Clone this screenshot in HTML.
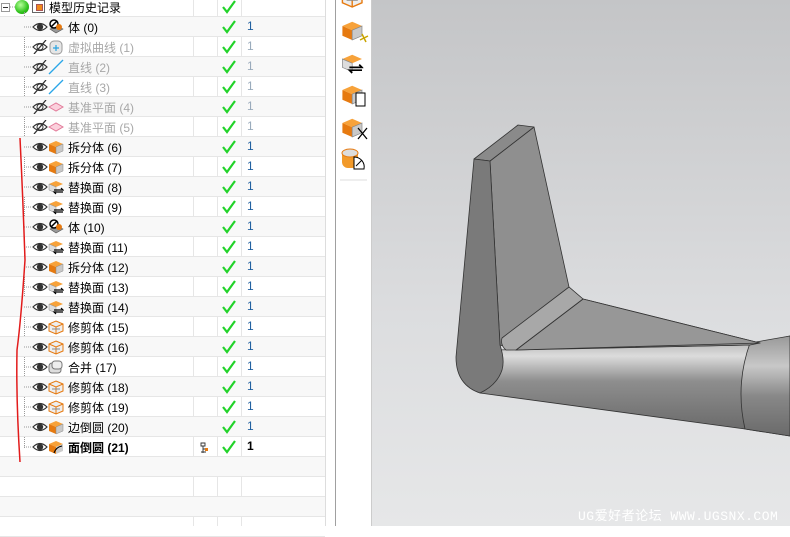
<!DOCTYPE html>
<html><head><meta charset="utf-8"><style>
*{margin:0;padding:0;box-sizing:border-box}
body{width:790px;height:526px;overflow:hidden;background:#fff;position:relative;font-family:"Liberation Sans","Noto Sans CJK SC",sans-serif;font-size:12px;color:#000}
.row{position:absolute;left:0;width:325px;height:20px;border-bottom:1px solid #e6e6e6}
.lbl{position:absolute;left:68px;top:2px;white-space:nowrap}
.dim{color:#a8a8a8}
.ck{position:absolute;left:221px;top:2px}
.one{position:absolute;left:247px;top:2px;color:#1f5f9f}
.dim .one{color:#9ab}
.eye{position:absolute;left:32px;top:3px}
.ic{position:absolute;left:48px;top:2px}
.vl{position:absolute;top:0;height:526px;width:1px;background:#e6e6e6}
</style></head><body>
<svg width="0" height="0" style="position:absolute">
<defs>
<symbol id="ck" viewBox="0 0 16 16"><path d="M2 8 L6 13 L14 2" fill="none" stroke="#22d32a" stroke-width="2.2"/></symbol>
<symbol id="eye" viewBox="0 0 16 14"><path d="M1 7 Q8 0 15 7 Q8 14 1 7Z" fill="#fff" stroke="#333" stroke-width="1.2"/><circle cx="8" cy="7" r="3.2" fill="#333"/></symbol>
<symbol id="eyeh" viewBox="0 0 16 14"><path d="M1 7 Q8 0 15 7 Q8 14 1 7Z" fill="none" stroke="#333" stroke-width="1.2"/><circle cx="8" cy="7" r="3" fill="none" stroke="#333"/><path d="M2 14 L14 0" stroke="#333" stroke-width="1.3"/></symbol>
<symbol id="box" viewBox="0 0 16 16"><path d="M1 5 L8 2 L15 5 L8 8Z" fill="#f7a23a"/><path d="M1 5 L8 8 L8 15 L1 12Z" fill="#e67a10"/><path d="M8 8 L15 5 L15 12 L8 15Z" fill="#c9c9c9" stroke="#888" stroke-width=".5"/></symbol>
<symbol id="rep" viewBox="0 0 16 16"><path d="M1 5 L8 2 L15 5 L8 8Z" fill="#f7a23a"/><path d="M1 5 L8 8 L8 14 L1 11Z" fill="#ddd" stroke="#888" stroke-width=".5"/><path d="M6 11 H15 L13 9 M15 13 H6 L8 15" fill="none" stroke="#000" stroke-width="1.2"/></symbol>
<symbol id="trim" viewBox="0 0 16 16"><path d="M1 5 L8 2 L15 5 L15 12 L8 15 L1 12Z" fill="#eee" stroke="#e67a10"/><path d="M1 5 L8 8 L15 5 M8 8 V15" fill="none" stroke="#e67a10"/><path d="M4 10 L12 10" stroke="#888"/></symbol>
<symbol id="body" viewBox="0 0 16 16"><path d="M2 10 L9 7 L15 10 L8 14Z" fill="#999" stroke="#555" stroke-width=".6"/><circle cx="6" cy="5" r="4" fill="#fff" stroke="#000" stroke-width="1.5"/><path d="M3 8 L9 2" stroke="#000" stroke-width="1.5"/><circle cx="11" cy="8" r="3" fill="#e67a10"/></symbol>
<symbol id="unite" viewBox="0 0 16 16"><rect x="1" y="4" width="12" height="10" rx="3" fill="#ddd" stroke="#777"/><rect x="4" y="2" width="10" height="8" rx="3" fill="#eee" stroke="#777"/></symbol>
<symbol id="blend" viewBox="0 0 16 16"><path d="M1 5 L8 2 L15 5 L8 8Z" fill="#f7a23a"/><path d="M1 5 L8 8 L8 15 L1 12Z" fill="#e67a10"/><path d="M8 8 L15 5 L15 12 L8 15Z" fill="#ccc"/><path d="M6 14 Q8 8 14 7" fill="none" stroke="#000" stroke-width="1.1"/></symbol>
<symbol id="curve" viewBox="0 0 16 16"><rect x="2" y="2" width="12" height="13" rx="4" fill="#e6e6e6" stroke="#999"/><path d="M8 6 V12 M5 9 H11" stroke="#29a3e0" stroke-width="1.2"/></symbol>
<symbol id="line" viewBox="0 0 16 16"><path d="M1 15 L15 1" stroke="#2aa6e8" stroke-width="1.3"/></symbol>
<symbol id="plane" viewBox="0 0 16 16"><path d="M1 8 L8 4 L15 8 L8 12Z" fill="#fbd0dc" stroke="#e27b9a"/></symbol>
</defs></svg>

<div class="vl" style="left:193px"></div>
<div class="vl" style="left:217px"></div>
<div class="vl" style="left:241px"></div>
<div class="vl" style="left:325px;background:#ddd"></div>

<div class="row" style="top:-3px"><div style="position:absolute;left:1px;top:6px;width:9px;height:9px;border:1px solid #999;background:#fff"><div style="position:absolute;left:1px;top:3px;width:5px;height:1px;background:#333"></div></div><div style="position:absolute;left:15px;top:3px;width:14px;height:14px;border-radius:50%;background:radial-gradient(circle at 40% 35%,#b6ff9a,#2fc21b 60%,#1a8a10)"></div><div style="position:absolute;left:32px;top:3px;width:13px;height:13px;border:1px solid #666;background:#fff"><div style="position:absolute;left:3px;top:3px;width:7px;height:7px;background:#f08a1a;border:1px solid #a55"></div></div><span class="lbl" style="left:49px">模型历史记录</span><svg class="ck" width="16" height="16"><use href="#ck"/></svg></div>

<div style="position:absolute;left:24px;top:12px;width:0;height:436px;border-left:1px dotted #999"></div>

<div class="row" style="top:17px;background:#f8f8f8"><svg class="eye" width="16" height="14"><use href="#eye"/></svg><svg class="ic" width="16" height="16"><use href="#body"/></svg><span class="lbl">体 (0)</span><svg class="ck" width="16" height="16"><use href="#ck"/></svg><span class="one">1</span></div>
<div class="row dim" style="top:37px"><svg class="eye" width="16" height="14"><use href="#eyeh"/></svg><svg class="ic" width="16" height="16"><use href="#curve"/></svg><span class="lbl">虚拟曲线 (1)</span><svg class="ck" width="16" height="16"><use href="#ck"/></svg><span class="one">1</span></div>
<div class="row dim" style="top:57px;background:#f8f8f8"><svg class="eye" width="16" height="14"><use href="#eyeh"/></svg><svg class="ic" width="16" height="16"><use href="#line"/></svg><span class="lbl">直线 (2)</span><svg class="ck" width="16" height="16"><use href="#ck"/></svg><span class="one">1</span></div>
<div class="row dim" style="top:77px"><svg class="eye" width="16" height="14"><use href="#eyeh"/></svg><svg class="ic" width="16" height="16"><use href="#line"/></svg><span class="lbl">直线 (3)</span><svg class="ck" width="16" height="16"><use href="#ck"/></svg><span class="one">1</span></div>
<div class="row dim" style="top:97px;background:#f8f8f8"><svg class="eye" width="16" height="14"><use href="#eyeh"/></svg><svg class="ic" width="16" height="16"><use href="#plane"/></svg><span class="lbl">基准平面 (4)</span><svg class="ck" width="16" height="16"><use href="#ck"/></svg><span class="one">1</span></div>
<div class="row dim" style="top:117px"><svg class="eye" width="16" height="14"><use href="#eyeh"/></svg><svg class="ic" width="16" height="16"><use href="#plane"/></svg><span class="lbl">基准平面 (5)</span><svg class="ck" width="16" height="16"><use href="#ck"/></svg><span class="one">1</span></div>
<div class="row" style="top:137px;background:#f8f8f8"><svg class="eye" width="16" height="14"><use href="#eye"/></svg><svg class="ic" width="16" height="16"><use href="#box"/></svg><span class="lbl">拆分体 (6)</span><svg class="ck" width="16" height="16"><use href="#ck"/></svg><span class="one">1</span></div>
<div class="row" style="top:157px"><svg class="eye" width="16" height="14"><use href="#eye"/></svg><svg class="ic" width="16" height="16"><use href="#box"/></svg><span class="lbl">拆分体 (7)</span><svg class="ck" width="16" height="16"><use href="#ck"/></svg><span class="one">1</span></div>
<div class="row" style="top:177px;background:#f8f8f8"><svg class="eye" width="16" height="14"><use href="#eye"/></svg><svg class="ic" width="16" height="16"><use href="#rep"/></svg><span class="lbl">替换面 (8)</span><svg class="ck" width="16" height="16"><use href="#ck"/></svg><span class="one">1</span></div>
<div class="row" style="top:197px"><svg class="eye" width="16" height="14"><use href="#eye"/></svg><svg class="ic" width="16" height="16"><use href="#rep"/></svg><span class="lbl">替换面 (9)</span><svg class="ck" width="16" height="16"><use href="#ck"/></svg><span class="one">1</span></div>
<div class="row" style="top:217px;background:#f8f8f8"><svg class="eye" width="16" height="14"><use href="#eye"/></svg><svg class="ic" width="16" height="16"><use href="#body"/></svg><span class="lbl">体 (10)</span><svg class="ck" width="16" height="16"><use href="#ck"/></svg><span class="one">1</span></div>
<div class="row" style="top:237px"><svg class="eye" width="16" height="14"><use href="#eye"/></svg><svg class="ic" width="16" height="16"><use href="#rep"/></svg><span class="lbl">替换面 (11)</span><svg class="ck" width="16" height="16"><use href="#ck"/></svg><span class="one">1</span></div>
<div class="row" style="top:257px;background:#f8f8f8"><svg class="eye" width="16" height="14"><use href="#eye"/></svg><svg class="ic" width="16" height="16"><use href="#box"/></svg><span class="lbl">拆分体 (12)</span><svg class="ck" width="16" height="16"><use href="#ck"/></svg><span class="one">1</span></div>
<div class="row" style="top:277px"><svg class="eye" width="16" height="14"><use href="#eye"/></svg><svg class="ic" width="16" height="16"><use href="#rep"/></svg><span class="lbl">替换面 (13)</span><svg class="ck" width="16" height="16"><use href="#ck"/></svg><span class="one">1</span></div>
<div class="row" style="top:297px;background:#f8f8f8"><svg class="eye" width="16" height="14"><use href="#eye"/></svg><svg class="ic" width="16" height="16"><use href="#rep"/></svg><span class="lbl">替换面 (14)</span><svg class="ck" width="16" height="16"><use href="#ck"/></svg><span class="one">1</span></div>
<div class="row" style="top:317px"><svg class="eye" width="16" height="14"><use href="#eye"/></svg><svg class="ic" width="16" height="16"><use href="#trim"/></svg><span class="lbl">修剪体 (15)</span><svg class="ck" width="16" height="16"><use href="#ck"/></svg><span class="one">1</span></div>
<div class="row" style="top:337px;background:#f8f8f8"><svg class="eye" width="16" height="14"><use href="#eye"/></svg><svg class="ic" width="16" height="16"><use href="#trim"/></svg><span class="lbl">修剪体 (16)</span><svg class="ck" width="16" height="16"><use href="#ck"/></svg><span class="one">1</span></div>
<div class="row" style="top:357px"><svg class="eye" width="16" height="14"><use href="#eye"/></svg><svg class="ic" width="16" height="16"><use href="#unite"/></svg><span class="lbl">合并 (17)</span><svg class="ck" width="16" height="16"><use href="#ck"/></svg><span class="one">1</span></div>
<div class="row" style="top:377px;background:#f8f8f8"><svg class="eye" width="16" height="14"><use href="#eye"/></svg><svg class="ic" width="16" height="16"><use href="#trim"/></svg><span class="lbl">修剪体 (18)</span><svg class="ck" width="16" height="16"><use href="#ck"/></svg><span class="one">1</span></div>
<div class="row" style="top:397px"><svg class="eye" width="16" height="14"><use href="#eye"/></svg><svg class="ic" width="16" height="16"><use href="#trim"/></svg><span class="lbl">修剪体 (19)</span><svg class="ck" width="16" height="16"><use href="#ck"/></svg><span class="one">1</span></div>
<div class="row" style="top:417px;background:#f8f8f8"><svg class="eye" width="16" height="14"><use href="#eye"/></svg><svg class="ic" width="16" height="16"><use href="#box"/></svg><span class="lbl">边倒圆 (20)</span><svg class="ck" width="16" height="16"><use href="#ck"/></svg><span class="one">1</span></div>
<div class="row" style="top:437px"><svg class="eye" width="16" height="14"><use href="#eye"/></svg><svg class="ic" width="16" height="16"><use href="#blend"/></svg><span class="lbl" style="font-weight:bold">面倒圆 (21)</span><svg style="position:absolute;left:200px;top:5px" width="9" height="12"><path d="M1 1h4v3h-4z M3 4v7 M3 7h3 M3 10h3 M1 10h2" fill="none" stroke="#333" stroke-width=".9"/><rect x="5" y="6" width="3" height="3" fill="#e67a10"/></svg><svg class="ck" width="16" height="16"><use href="#ck"/></svg><span class="one" style="font-weight:bold;color:#000">1</span></div>
<div class="row" style="top:457px;background:#f8f8f8"></div>
<div class="row" style="top:477px"></div>
<div class="row" style="top:497px;background:#f8f8f8"></div>
<div class="row" style="top:517px"></div>

<svg style="position:absolute;left:0;top:0" width="40" height="465">
<g stroke="#999" stroke-dasharray="1 1">
<path d="M24 27H32M24 47H32M24 67H32M24 87H32M24 107H32M24 127H32M24 147H32M24 167H32M24 187H32M24 207H32M24 227H32M24 247H32M24 267H32M24 287H32M24 307H32M24 327H32M24 347H32M24 367H32M24 387H32M24 407H32M24 427H32M24 447H32M10 7H15"/>
</g>
<path d="M20 138 Q23 200 25 260 Q21 320 17 350 Q16 400 20 462" fill="none" stroke="#e21b1b" stroke-width="1.5"/>
</svg>

<div style="position:absolute;left:326px;top:0;width:10px;height:526px;background:#fff"></div>
<div style="position:absolute;left:335px;top:0;width:1px;height:526px;background:#a0a0a0"></div>
<div style="position:absolute;left:336px;top:0;width:36px;height:526px;background:#fff">
<svg width="36" height="190">
<g transform="translate(5,-14) scale(1.4)"><use href="#trim" width="16" height="16"/></g>
<g transform="translate(5,19) scale(1.4)"><use href="#box" width="16" height="16"/></g><path d="M26 34 L30 42 M24 40 L32 36" stroke="#c9a400" stroke-width="1.5"/>
<g transform="translate(5,52) scale(1.4)"><use href="#rep" width="16" height="16"/></g>
<g transform="translate(5,83) scale(1.4)"><use href="#box" width="16" height="16"/></g><rect x="20" y="93" width="9" height="13" fill="#fff" stroke="#000"/>
<g transform="translate(5,116) scale(1.4)"><use href="#box" width="16" height="16"/></g><path d="M22 128 L31 139 M31 128 L22 139" stroke="#000" stroke-width="1.3"/>
<rect x="6" y="150" width="16" height="18" rx="6" fill="#f29a2a"/><ellipse cx="14" cy="153" rx="8" ry="4" fill="#ddd" stroke="#e67a10"/><path d="M18 169 V157 A10 10 0 0 1 28 169Z" fill="#fff" stroke="#000"/><path d="M20 166 L26 160" stroke="#000"/>
<path d="M4 180 H31" stroke="#ddd"/>
</svg></div>
<div style="position:absolute;left:371px;top:0;width:1px;height:526px;background:#ccc"></div>

<div style="position:absolute;left:372px;top:0;width:418px;height:526px;background:linear-gradient(#c4c5c7,#dcdddf 60%,#e6e7e8)">
<svg width="418" height="526" style="position:absolute;left:0;top:0">
<defs>
<linearGradient id="tube" x1="0" y1="0" x2="0" y2="1"><stop offset="0" stop-color="#a9a9a9"/><stop offset=".2" stop-color="#dcdcdc"/><stop offset=".45" stop-color="#8e8e8e"/><stop offset="1" stop-color="#666"/></linearGradient>
<linearGradient id="tube2" x1="0" y1="0" x2="0" y2="1"><stop offset="0" stop-color="#999"/><stop offset=".3" stop-color="#c8c8c8"/><stop offset=".6" stop-color="#888"/><stop offset="1" stop-color="#6a6a6a"/></linearGradient>
</defs>
<g transform="translate(-372,0)" stroke="#333" stroke-width=".8" stroke-linejoin="round">
<path d="M495 350 L750 345 L790 336 L790 436 L745 429 L480 393 Q495 385 500 365Z" fill="url(#tube)"/>
<path d="M750 343 Q735 385 745 429 L790 436 L790 336Z" fill="url(#tube2)"/>
<path d="M490 161 L534 127 L569 287 L583 299 L760 343 L750 345 L516 350 L500 345Z" fill="#8f8f8f"/>
<path d="M583 299 L760 343 L516 350Z" fill="#979797"/>
<path d="M569 287 L583 299 L516 350 L506 350 Q500 345 502 338Z" fill="#a8a8a8"/>
<path d="M474 159 L518 125 L534 127 L490 161Z" fill="#8a8a8a"/>
<path d="M474 159 L490 161 L500 345 Q505 360 502 370 Q497 385 480 393 Q456 385 456 357Z" fill="#7a7a7a"/>
</g>
</svg>
<div style="position:absolute;left:206px;top:505px;font-family:'Liberation Mono','Noto Sans CJK SC',monospace;font-size:13px;color:#fff;letter-spacing:.5px;white-space:nowrap">UG爱好者论坛 WWW.UGSNX.COM</div>
</div>
</body></html>
